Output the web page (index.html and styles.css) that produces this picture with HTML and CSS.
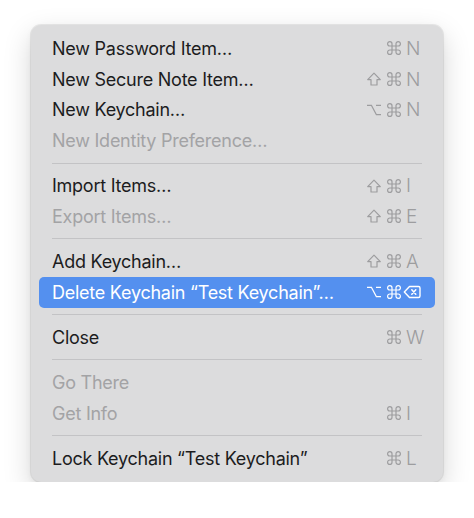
FILE: index.html
```html
<!DOCTYPE html>
<html>
<head>
<meta charset="utf-8">
<link rel="stylesheet" href="styles.css">
</head>
<body>
<svg width="0" height="0" class="defs" aria-hidden="true">
  <defs>
    <symbol id="cmd" viewBox="0 0 16 16"><path d="M6 6V3.8A2.2 2.2 0 1 0 3.8 6H12.2A2.2 2.2 0 1 0 10 3.8V12.2A2.2 2.2 0 1 0 12.2 10H3.8A2.2 2.2 0 1 0 6 12.2Z" fill="none" stroke="currentColor" stroke-width="1.2" stroke-linejoin="round"/></symbol>
    <symbol id="shift" viewBox="0 0 16 16"><path d="M8 2.2L14.3 8.6H11V14H5V8.6H1.7Z" fill="none" stroke="currentColor" stroke-width="1.2" stroke-linejoin="round"/></symbol>
    <symbol id="opt" viewBox="0 0 16 16"><path d="M1 3.3H5.4L10.4 12.7H15M10 3.3H15" fill="none" stroke="currentColor" stroke-width="1.3"/></symbol>
    <symbol id="del" viewBox="0 0 18 16"><path d="M6.5 2.5H15.5A1.5 1.5 0 0 1 17 4V12A1.5 1.5 0 0 1 15.5 13.5H6.5L1.3 8Z" fill="none" stroke="currentColor" stroke-width="1.4" stroke-linejoin="round"/><path d="M8.8 5.8L12.8 10.2M12.8 5.8L8.8 10.2" fill="none" stroke="currentColor" stroke-width="1.5" stroke-linecap="round"/></symbol>
  </defs>
</svg>
<div class="menu">
  <div class="item"><span class="label">New Password Item…</span><span class="sc"><svg class="ic"><use href="#cmd"/></svg><span class="key">N</span></span></div>
  <div class="item"><span class="label">New Secure Note Item…</span><span class="sc"><svg class="ic"><use href="#shift"/></svg><svg class="ic"><use href="#cmd"/></svg><span class="key">N</span></span></div>
  <div class="item"><span class="label">New Keychain…</span><span class="sc"><svg class="ic"><use href="#opt"/></svg><svg class="ic"><use href="#cmd"/></svg><span class="key">N</span></span></div>
  <div class="item disabled"><span class="label">New Identity Preference…</span></div>
  <div class="sep"></div>
  <div class="item"><span class="label">Import Items…</span><span class="sc"><svg class="ic"><use href="#shift"/></svg><svg class="ic"><use href="#cmd"/></svg><span class="key">I</span></span></div>
  <div class="item disabled"><span class="label">Export Items…</span><span class="sc"><svg class="ic"><use href="#shift"/></svg><svg class="ic"><use href="#cmd"/></svg><span class="key">E</span></span></div>
  <div class="sep"></div>
  <div class="item"><span class="label">Add Keychain…</span><span class="sc"><svg class="ic"><use href="#shift"/></svg><svg class="ic"><use href="#cmd"/></svg><span class="key">A</span></span></div>
  <div class="item selected"><span class="label">Delete Keychain “Test Keychain”…</span><span class="sc"><svg class="ic"><use href="#opt"/></svg><svg class="ic"><use href="#cmd"/></svg><span class="key"><svg class="ic wide"><use href="#del"/></svg></span></span></div>
  <div class="sep"></div>
  <div class="item"><span class="label">Close</span><span class="sc"><svg class="ic"><use href="#cmd"/></svg><span class="key">W</span></span></div>
  <div class="sep"></div>
  <div class="item disabled"><span class="label">Go There</span></div>
  <div class="item disabled"><span class="label">Get Info</span><span class="sc"><svg class="ic"><use href="#cmd"/></svg><span class="key">I</span></span></div>
  <div class="sep"></div>
  <div class="item"><span class="label">Lock Keychain “Test Keychain”</span><span class="sc"><svg class="ic"><use href="#cmd"/></svg><span class="key">L</span></span></div>
</div>
</body>
</html>
```

FILE: styles.css
```css
html, body {
  margin: 0;
  padding: 0;
  background: #ffffff;
}
body {
  padding: 25px 0 0 31px;
  font-family: Inter, "Noto Sans", "DejaVu Sans", sans-serif;
}
.defs {
  position: absolute;
  width: 0;
  height: 0;
  overflow: hidden;
}
.menu {
  width: 412px;
  box-sizing: border-box;
  padding: 8px 8px;
  background: #dcdcdd;
  border-radius: 10px;
  box-shadow: 0 0 0 1px rgba(0,0,0,0.07), 0 10px 28px rgba(0,0,0,0.17), 0 2px 6px rgba(0,0,0,0.05);
}
.item {
  height: 30.7px;
  display: flex;
  align-items: center;
  justify-content: space-between;
  padding: 0 12px 0 13px;
  border-radius: 5px;
  font-size: 18px;
  letter-spacing: -0.25px;
  color: #1c1c1e;
}
.item.disabled {
  color: #a3a3a5;
}
.item.selected {
  background: #5490ef;
  color: #ffffff;
}
.sc {
  display: flex;
  align-items: center;
  gap: 4px;
  color: #9d9d9f;
  font-size: 19px;
  font-weight: 300;
  letter-spacing: 0;
}
.item.selected .sc {
  color: #ffffff;
}
.ic {
  width: 16px;
  height: 16px;
  display: block;
}
.ic.wide {
  width: 18px;
  margin-left: -3px;
}
.key {
  width: 17px;
  display: flex;
  align-items: center;
}
.sep {
  height: 14.5px;
  display: flex;
  align-items: center;
  padding: 0 13px;
}
.sep::after {
  content: "";
  flex: 1;
  height: 1px;
  background: #c3c3c5;
}
```
